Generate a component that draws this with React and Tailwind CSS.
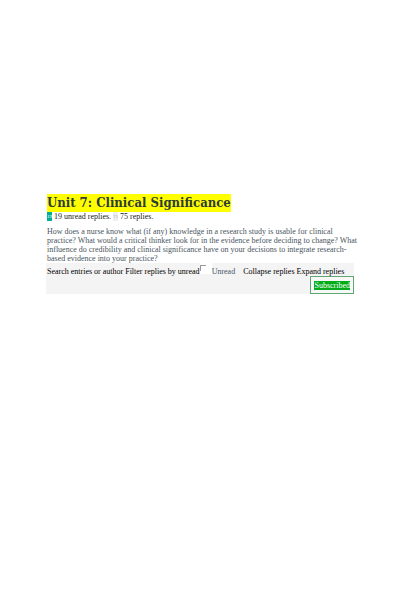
import { useState } from "react";

const REPLY_COUNTS = { unread: 19, total: 75 };

function CountBadge({ value, className }) {
  return (
    <span
      aria-hidden="true"
      className={`w-[5px] h-[9px] flex items-center justify-center overflow-hidden text-[5px] leading-none ${className}`}
    >
      {value}
    </span>
  );
}

function DiscussionHeader() {
  return (
    <header>
      <h1 className="flex">
        <span className="bg-[#ffff00] text-[#2d3b35] font-['DejaVu_Serif_Condensed','DejaVu_Serif',serif] font-bold text-[13px] leading-[18px] whitespace-nowrap">
          Unit 7: Clinical Significance
        </span>
      </h1>
      <div className="flex items-center gap-[2px] h-[9px] leading-[9px] whitespace-nowrap text-[#222]">
        <CountBadge value={REPLY_COUNTS.unread} className="bg-[#00ac97] text-white" />
        <span>{REPLY_COUNTS.unread} unread replies.</span>
        <CountBadge value={REPLY_COUNTS.total} className="bg-[#eee] text-[#aaa]" />
        <span>{REPLY_COUNTS.total} replies.</span>
      </div>
    </header>
  );
}

function ReplyToolbar() {
  const [unreadOnly, setUnreadOnly] = useState(false);
  const [subscribed, setSubscribed] = useState(true);

  return (
    <div className="-ml-px bg-[#f4f4f4] text-black">
      <div className="flex items-center h-[13px] pl-px whitespace-nowrap">
        <span className="pt-1">Search entries or author Filter replies by unread</span>
        <span className="w-3 h-[11px] self-start bg-white flex items-start pt-[2px]">
          <input
            id="unread"
            type="checkbox"
            checked={unreadOnly}
            onChange={(e) => setUnreadOnly(e.target.checked)}
            className="appearance-none w-[6px] h-[6px] border-t border-l border-[#999] checked:bg-[#888]"
          />
        </span>
        <label htmlFor="unread" className="pt-1 text-[#445566]">
          Unread
        </label>
        <button className="pt-1 ml-2">Collapse replies</button>
        <button className="pt-1 ml-[2px]">Expand replies</button>
      </div>
      <div className="flex justify-end">
        <button
          onClick={() => setSubscribed(!subscribed)}
          className="border border-[#5fa873] bg-[#f8f8f8] px-[3px] h-[18px] flex items-center"
        >
          <span className="bg-[#00ac18] text-white leading-[9px]">
            {subscribed ? "Subscribed" : "Subscribe"}
          </span>
        </button>
      </div>
    </div>
  );
}

export default function App() {
  return (
    <main className="min-h-screen bg-white pt-[194px] pl-[47px] pr-[46px] font-['Liberation_Serif',serif] text-[8px] leading-[9px]">
      <DiscussionHeader />
      <p className="mt-[6px] -mr-[6px] text-[#4a5560]">
        How does a nurse know what (if any) knowledge in a research study is usable for clinical
        practice? What would a critical thinker look for in the evidence before deciding to change?
        What influence do credibility and clinical significance have on your decisions to integrate
        research-based evidence into your practice?
      </p>
      <ReplyToolbar />
    </main>
  );
}
